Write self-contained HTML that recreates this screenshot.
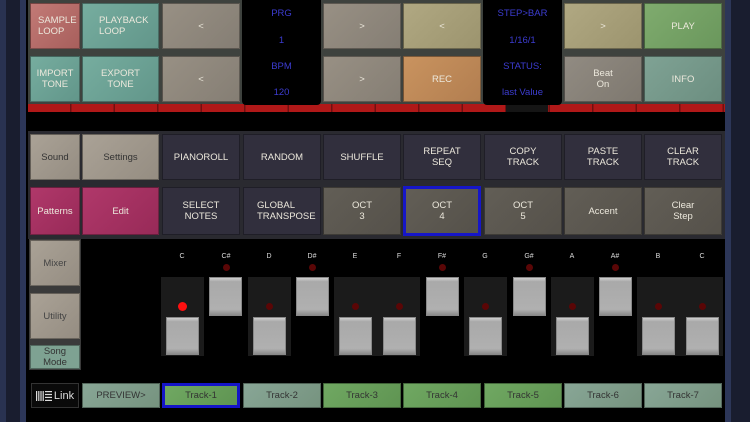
<!DOCTYPE html>
<html><head><meta charset="utf-8"><style>
*{margin:0;padding:0;box-sizing:border-box}
body{width:750px;height:422px;overflow:hidden;background:#000;position:relative;font-family:"Liberation Sans",sans-serif}
.a{position:absolute}
.b{position:absolute;display:flex;align-items:center;justify-content:center;text-align:center;font-size:9.5px;line-height:11px;color:#ece8dc;border:1px solid rgba(0,0,0,.35)}
.d{position:absolute;color:#3c3cd0;font-size:9.5px;text-align:center}
.lbl{position:absolute;color:#ddd;font-size:7px;width:20px;text-align:center;top:253px}
.dot{position:absolute;width:7px;height:7px;border-radius:50%;background:#5a0606}
.pan{position:absolute;background:#1b1b1b;top:277px;height:79px}
.key{position:absolute;width:33px;background:linear-gradient(#cfcfcf,#a9a9a9 10%,#b0b0b0 85%,#8a8a8a);border:1px solid #888}
</style></head><body>
<!-- frame -->
<div class="a" style="left:0;top:0;width:6px;height:422px;background:#293251"></div>
<div class="a" style="left:6px;top:0;width:14px;height:422px;background:#191d2f"></div>
<div class="a" style="left:20px;top:0;width:6px;height:422px;background:#2c3658"></div>
<div class="a" style="left:725px;top:0;width:6px;height:422px;background:#2c3658"></div>
<div class="a" style="left:731px;top:0;width:19px;height:422px;background:#191d2f"></div>
<!-- top area bg -->
<div class="a" style="left:28px;top:0;width:697px;height:104px;background:#3e423e"></div>
<div class="a" style="left:28px;top:104px;width:697px;height:8px;background:repeating-linear-gradient(90deg,#b01818 0 42px,#701010 42px 43.5px)"></div>
<div class="a" style="left:506px;top:104px;width:42px;height:8px;background:#151515"></div>
<div class="a" style="left:28px;top:131px;width:455px;height:108px;background:#2a2a30"></div>
<div class="a" style="left:483px;top:131px;width:242px;height:108px;background:#2a2a30"></div>

<!-- row1 -->
<div class="b" style="left:30px;top:3px;width:50px;height:46px;background:linear-gradient(135deg,#c27a76,#a85f5c);justify-content:flex-start;padding-left:7px;text-align:left">SAMPLE<br>LOOP</div>
<div class="b" style="left:82px;top:3px;width:77px;height:46px;background:linear-gradient(135deg,#76ad9f,#62968a);justify-content:flex-start;padding-left:16px;text-align:left">PLAYBACK<br>LOOP</div>
<div class="b" style="left:162px;top:3px;width:78px;height:46px;background:linear-gradient(135deg,#989084,#857e74)">&lt;</div>
<div class="b" style="left:323px;top:3px;width:78px;height:46px;background:linear-gradient(135deg,#989084,#857e74)">&gt;</div>
<div class="b" style="left:403px;top:3px;width:78px;height:46px;background:linear-gradient(135deg,#b0a882,#9c946e)">&lt;</div>
<div class="b" style="left:564px;top:3px;width:78px;height:46px;background:linear-gradient(135deg,#b0a882,#9c946e)">&gt;</div>
<div class="b" style="left:644px;top:3px;width:78px;height:46px;background:linear-gradient(135deg,#7fab6e,#6a975c)">PLAY</div>
<!-- row2 -->
<div class="b" style="left:30px;top:56px;width:50px;height:46px;background:linear-gradient(135deg,#76ad9f,#62968a)">IMPORT<br>TONE</div>
<div class="b" style="left:82px;top:56px;width:77px;height:46px;background:linear-gradient(135deg,#76ad9f,#62968a)">EXPORT<br>TONE</div>
<div class="b" style="left:162px;top:56px;width:78px;height:46px;background:linear-gradient(135deg,#989084,#857e74)">&lt;</div>
<div class="b" style="left:323px;top:56px;width:78px;height:46px;background:linear-gradient(135deg,#989084,#857e74)">&gt;</div>
<div class="b" style="left:403px;top:56px;width:78px;height:46px;background:linear-gradient(135deg,#c9935f,#b27e50)">REC</div>
<div class="b" style="left:564px;top:56px;width:78px;height:46px;background:linear-gradient(135deg,#918b82,#7e786f)">Beat<br>On</div>
<div class="b" style="left:644px;top:56px;width:78px;height:46px;background:linear-gradient(135deg,#7fa294,#6c8e80)">INFO</div>
<!-- displays -->
<div class="a" style="left:242px;top:0;width:79px;height:105px;background:#000;border-radius:0 0 4px 4px"></div>
<div class="a" style="left:483px;top:0;width:79px;height:105px;background:#000;border-radius:0 0 4px 4px"></div>
<div class="d" style="left:242px;width:79px;top:8px">PRG</div>
<div class="d" style="left:242px;width:79px;top:35px">1</div>
<div class="d" style="left:242px;width:79px;top:61px">BPM</div>
<div class="d" style="left:242px;width:79px;top:87px">120</div>
<div class="d" style="left:483px;width:79px;top:8px">STEP&gt;BAR</div>
<div class="d" style="left:483px;width:79px;top:35px">1/16/1</div>
<div class="d" style="left:483px;width:79px;top:61px">STATUS:</div>
<div class="d" style="left:483px;width:79px;top:87px">last Value</div>

<!-- row3 -->
<div class="b" style="left:30px;top:134px;width:50px;height:46px;background:linear-gradient(135deg,#aaa296,#958d82);color:#333">Sound</div>
<div class="b" style="left:82px;top:134px;width:77px;height:46px;background:linear-gradient(135deg,#aaa296,#958d82);color:#333">Settings</div>
<div class="b" style="left:162px;top:134px;width:78px;height:46px;background:#312f3d">PIANOROLL</div>
<div class="b" style="left:243px;top:134px;width:78px;height:46px;background:#312f3d">RANDOM</div>
<div class="b" style="left:323px;top:134px;width:78px;height:46px;background:#312f3d">SHUFFLE</div>
<div class="b" style="left:403px;top:134px;width:78px;height:46px;background:#312f3d">REPEAT<br>SEQ</div>
<div class="b" style="left:484px;top:134px;width:78px;height:46px;background:#312f3d">COPY<br>TRACK</div>
<div class="b" style="left:564px;top:134px;width:78px;height:46px;background:#312f3d">PASTE<br>TRACK</div>
<div class="b" style="left:644px;top:134px;width:78px;height:46px;background:#312f3d">CLEAR<br>TRACK</div>
<!-- row4 -->
<div class="b" style="left:30px;top:187px;width:50px;height:48px;background:linear-gradient(135deg,#b0386a,#982a58)">Patterns</div>
<div class="b" style="left:82px;top:187px;width:77px;height:48px;background:linear-gradient(135deg,#b0386a,#982a58)">Edit</div>
<div class="b" style="left:162px;top:187px;width:78px;height:48px;background:#312f3d">SELECT<br>NOTES</div>
<div class="b" style="left:243px;top:187px;width:78px;height:48px;background:#312f3d;justify-content:flex-start;padding-left:13px;text-align:left">GLOBAL<br>TRANSPOSE</div>
<div class="b" style="left:323px;top:187px;width:78px;height:48px;background:linear-gradient(135deg,#625e56,#55514a)">OCT<br>3</div>
<div class="b" style="left:403px;top:186px;width:78px;height:50px;background:linear-gradient(135deg,#625e56,#55514a);border:3px solid #1616c8">OCT<br>4</div>
<div class="b" style="left:484px;top:187px;width:78px;height:48px;background:linear-gradient(135deg,#625e56,#55514a)">OCT<br>5</div>
<div class="b" style="left:564px;top:187px;width:78px;height:48px;background:linear-gradient(135deg,#625e56,#55514a)">Accent</div>
<div class="b" style="left:644px;top:187px;width:78px;height:48px;background:linear-gradient(135deg,#625e56,#55514a)">Clear<br>Step</div>

<!-- left column -->
<div class="a" style="left:29px;top:239px;width:52px;height:131px;background:#3a3a3a"></div>
<div class="b" style="left:30px;top:240px;width:50px;height:46px;background:linear-gradient(135deg,#aaa296,#958d82);color:#444">Mixer</div>
<div class="b" style="left:30px;top:293px;width:50px;height:46px;background:linear-gradient(135deg,#aaa296,#958d82);color:#444">Utility</div>
<div class="b" style="left:30px;top:345px;width:50px;height:24px;background:#7ea292;color:#333">Song<br>Mode</div>

<!-- keyboard -->
<div class="pan" style="left:161px;width:43px"></div>
<div class="pan" style="left:248px;width:43px"></div>
<div class="pan" style="left:334px;width:86px"></div>
<div class="pan" style="left:464px;width:43px"></div>
<div class="pan" style="left:551px;width:43px"></div>
<div class="pan" style="left:637px;width:86px"></div>

<div class="lbl" style="left:172px">C</div><div class="lbl" style="left:216px">C#</div><div class="lbl" style="left:259px">D</div><div class="lbl" style="left:302px">D#</div><div class="lbl" style="left:345px">E</div><div class="lbl" style="left:389px">F</div><div class="lbl" style="left:432px">F#</div><div class="lbl" style="left:475px">G</div><div class="lbl" style="left:519px">G#</div><div class="lbl" style="left:562px">A</div><div class="lbl" style="left:605px">A#</div><div class="lbl" style="left:648px">B</div><div class="lbl" style="left:692px">C</div>

<div class="dot" style="left:178px;top:302px;width:9px;height:9px;background:#ff1010"></div>
<div class="dot" style="left:266px;top:303px"></div><div class="dot" style="left:352px;top:303px"></div><div class="dot" style="left:396px;top:303px"></div><div class="dot" style="left:482px;top:303px"></div><div class="dot" style="left:569px;top:303px"></div><div class="dot" style="left:655px;top:303px"></div><div class="dot" style="left:699px;top:303px"></div>
<div class="dot" style="left:223px;top:264px"></div><div class="dot" style="left:309px;top:264px"></div><div class="dot" style="left:439px;top:264px"></div><div class="dot" style="left:526px;top:264px"></div><div class="dot" style="left:612px;top:264px"></div>

<div class="key" style="left:166px;top:317px;height:38px"></div>
<div class="key" style="left:253px;top:317px;height:38px"></div>
<div class="key" style="left:339px;top:317px;height:38px"></div>
<div class="key" style="left:383px;top:317px;height:38px"></div>
<div class="key" style="left:469px;top:317px;height:38px"></div>
<div class="key" style="left:556px;top:317px;height:38px"></div>
<div class="key" style="left:642px;top:317px;height:38px"></div>
<div class="key" style="left:686px;top:317px;height:38px"></div>
<div class="key" style="left:209px;top:277px;height:39px"></div>
<div class="key" style="left:296px;top:277px;height:39px"></div>
<div class="key" style="left:426px;top:277px;height:39px"></div>
<div class="key" style="left:513px;top:277px;height:39px"></div>
<div class="key" style="left:599px;top:277px;height:39px"></div>

<!-- bottom row -->
<div class="a" style="left:31px;top:383px;width:48px;height:25px;background:#0a0a0a;border:1px solid #333;color:#ddd;font-size:11px;display:flex;align-items:center;justify-content:center;gap:2px">
<svg width="16" height="10" viewBox="0 0 16 10"><g fill="#ddd"><rect x="0" y="0" width="1.2" height="10"/><rect x="2.2" y="0" width="1.2" height="10"/><rect x="4.4" y="0" width="1.2" height="10"/><rect x="6.6" y="0" width="1.2" height="10"/><rect x="9" y="0" width="7" height="1.2"/><rect x="9" y="2.9" width="7" height="1.2"/><rect x="9" y="5.8" width="7" height="1.2"/><rect x="9" y="8.8" width="7" height="1.2"/></g></svg>Link</div>
<div class="b" style="left:82px;top:383px;width:78px;height:25px;background:linear-gradient(135deg,#88a696,#76937f);color:#333">PREVIEW&gt;</div>
<div class="b" style="left:162px;top:383px;width:78px;height:25px;background:linear-gradient(135deg,#70a862,#5f9452);color:#333;border:3px solid #1414c8">Track-1</div>
<div class="b" style="left:243px;top:383px;width:78px;height:25px;background:linear-gradient(135deg,#88a696,#76937f);color:#333">Track-2</div>
<div class="b" style="left:323px;top:383px;width:78px;height:25px;background:linear-gradient(135deg,#70a862,#5f9452);color:#333">Track-3</div>
<div class="b" style="left:403px;top:383px;width:78px;height:25px;background:linear-gradient(135deg,#70a862,#5f9452);color:#333">Track-4</div>
<div class="b" style="left:484px;top:383px;width:78px;height:25px;background:linear-gradient(135deg,#70a862,#5f9452);color:#333">Track-5</div>
<div class="b" style="left:564px;top:383px;width:78px;height:25px;background:linear-gradient(135deg,#88a696,#76937f);color:#333">Track-6</div>
<div class="b" style="left:644px;top:383px;width:78px;height:25px;background:linear-gradient(135deg,#88a696,#76937f);color:#333">Track-7</div>
</body></html>
